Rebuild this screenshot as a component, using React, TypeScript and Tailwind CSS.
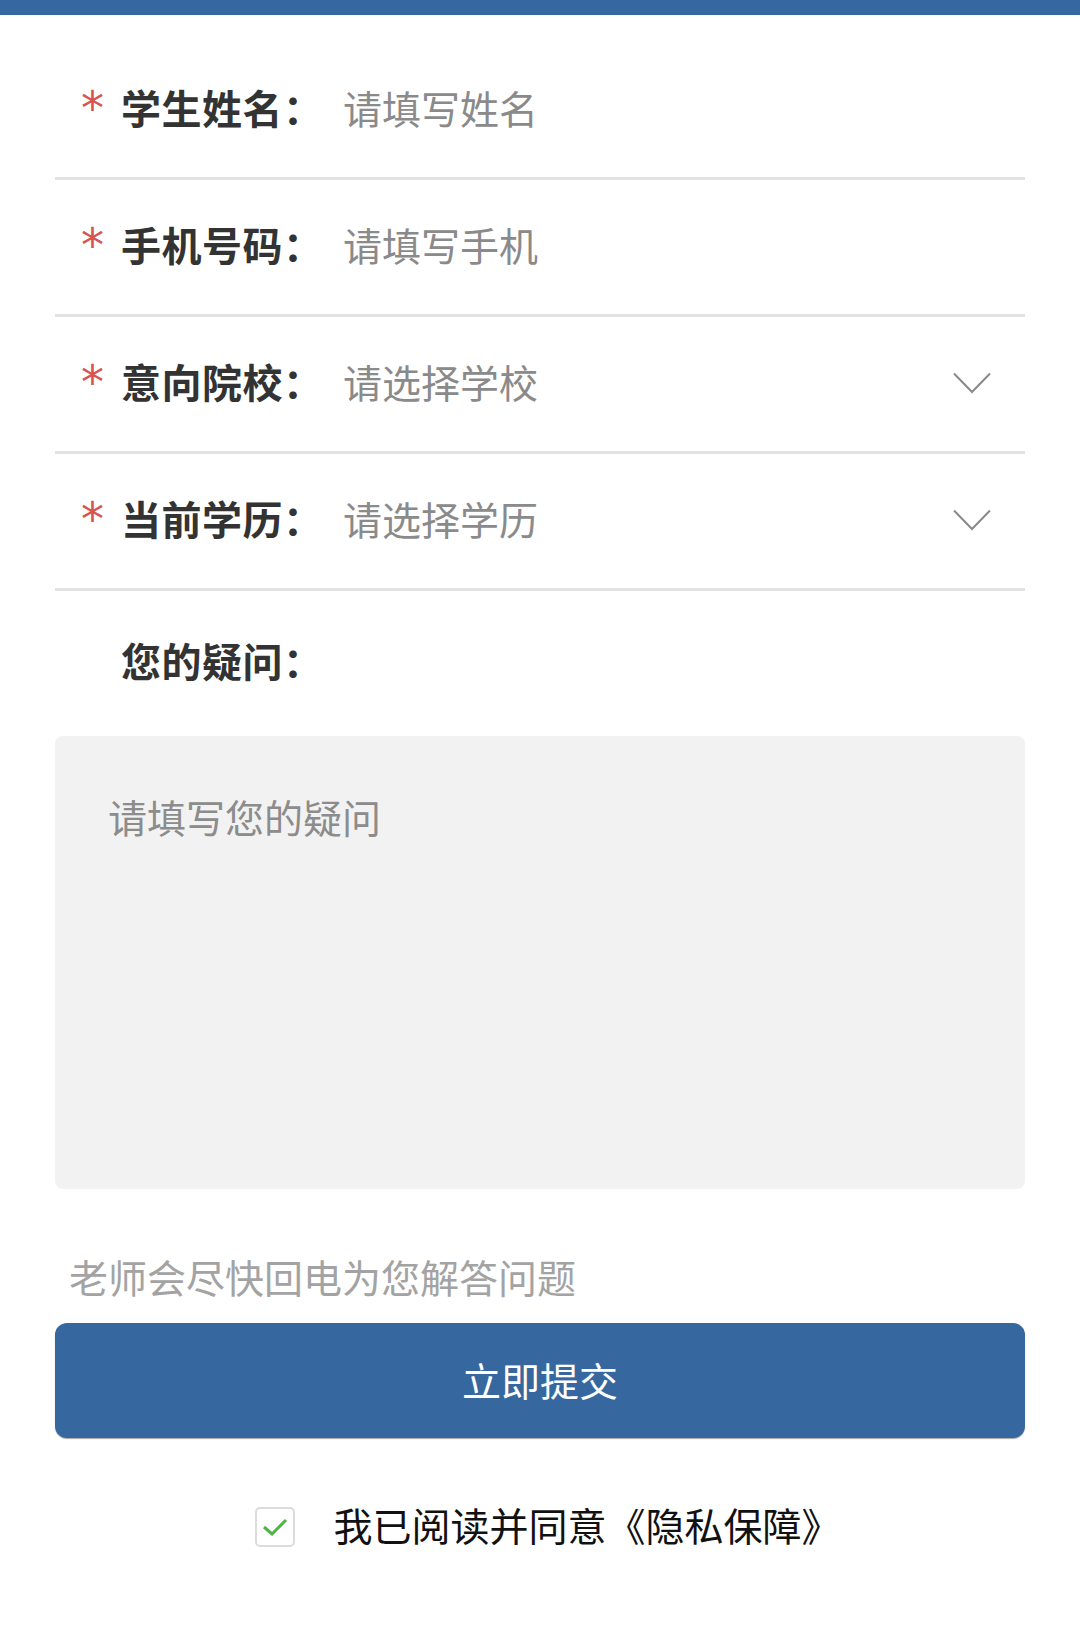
import { useState } from 'react';

const rows = [
  { label: '学生姓名：', placeholder: '请填写姓名', select: false },
  { label: '手机号码：', placeholder: '请填写手机', select: false },
  { label: '意向院校：', placeholder: '请选择学校', select: true },
  { label: '当前学历：', placeholder: '请选择学历', select: true },
];

function Chevron() {
  return (
    <svg width="38" height="22" viewBox="0 0 38 22" fill="none" className="mt-[4px]">
      <polyline points="1,1.5 19,20 37,1.5" stroke="#8a8a8a" strokeWidth="2" />
    </svg>
  );
}

export default function App() {
  const [agreed, setAgreed] = useState(true);

  return (
    <div className="min-h-[1631px] bg-white font-['Noto_Sans_CJK_SC','Noto_Sans',sans-serif]">
      {/* Top bar */}
      <div className="h-[15px] bg-[#3767a0]"></div>

      <form className="px-[55px] pt-[28px]" onSubmit={(e) => e.preventDefault()}>
        {rows.map((row) => (
          <div
            key={row.label}
            className="flex items-center h-[137px] border-b-[3px] border-[#e3e3e3] pl-[26px] pr-[34px] pb-[6px]"
          >
            <span className="w-[40px] h-[38px] text-[46px] leading-[40px] text-[#d9534f] font-['DejaVu_Sans',sans-serif]">
              *
            </span>
            <span className="w-[222px] text-[40px] leading-[38px] font-bold text-[#333333] tracking-[0.5px]">
              {row.label}
            </span>
            {row.select ? (
              <>
                <span className="flex-1 text-[39px] leading-[38px] text-[#8a8a8a]">
                  {row.placeholder}
                </span>
                <Chevron />
              </>
            ) : (
              <input
                className="flex-1 min-w-0 text-[39px] leading-[38px] text-[#333333] outline-none bg-transparent placeholder:text-[#8a8a8a]"
                placeholder={row.placeholder}
              />
            )}
          </div>
        ))}

        <div className="pl-[66px] pt-[50px] text-[40px] leading-[38px] font-bold text-[#333333] tracking-[0.5px]">
          您的疑问：
        </div>

        <textarea
          className="mt-[57px] block w-full h-[453px] bg-[#f2f2f2] rounded-[8px] pt-[61px] pl-[53px] pr-[40px] text-[39px] leading-[38px] text-[#333333] outline-none resize-none placeholder:text-[#8c8c8c]"
          placeholder="请填写您的疑问"
        />

        <p className="mt-[68px] pl-[14px] text-[39px] leading-[38px] text-[#a3a3a3]">
          老师会尽快回电为您解答问题
        </p>

        <button
          type="submit"
          className="mt-[28px] w-full h-[115px] pb-[4px] rounded-[12px] bg-[#36679f] text-white text-[39px] leading-[38px] shadow-[0_1px_1px_rgba(0,0,0,0.35)]"
        >
          立即提交
        </button>

        <div className="mt-[67px] pl-[16px] flex items-center justify-center gap-[38px]">
          <button
            type="button"
            onClick={() => setAgreed(!agreed)}
            className="w-[40px] h-[40px] rounded-[5px] border-2 border-[#dcdcdc] flex items-center justify-center"
          >
            {agreed && (
              <svg width="26" height="20" viewBox="0 0 26 20" fill="none">
                <polyline points="2,10 10,17 24,3" stroke="#4cb544" strokeWidth="3" />
              </svg>
            )}
          </button>
          <span className="pb-[5px] text-[39px] leading-[38px] text-[#111111]">我已阅读并同意《隐私保障》</span>
        </div>
      </form>
    </div>
  );
}
